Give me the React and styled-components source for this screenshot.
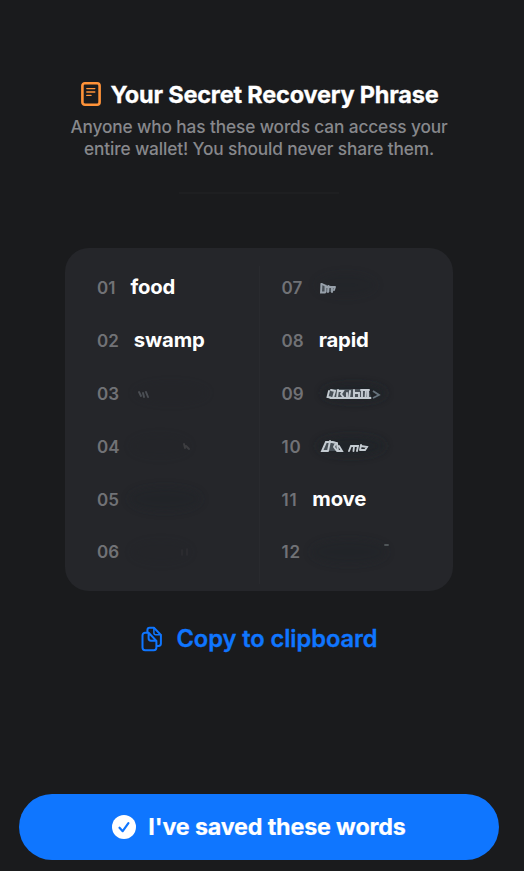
import React from "react";
import styled, { createGlobalStyle } from "styled-components";

const GlobalStyle = createGlobalStyle`
  * { box-sizing: border-box; }
  body { margin: 0; background: #1a1b1d; font-family: Inter, "Liberation Sans", sans-serif; }
`;

const Screen = styled.main`
  width: 524px;
  height: 871px;
  background: #1a1b1d;
  display: flex;
  flex-direction: column;
  align-items: center;
  padding: 81px 25px 11px 19px;
`;

const Title = styled.h1`
  margin: 0;
  height: 28px;
  padding-left: 2px;
  display: flex;
  align-items: center;
  gap: 9px;
  font-size: 23.5px;
  line-height: 28px;
  font-weight: 700;
  letter-spacing: -0.19px;
  color: #fff;
  -webkit-text-stroke: 0.3px #fff;
  white-space: nowrap;
  svg { flex: none; margin-bottom: 2px; }
`;

const Hint = styled.p`
  margin: 7px 0 0;
  font-size: 17.3px;
  line-height: 22px;
  font-weight: 500;
  letter-spacing: -0.13px;
  color: #87888c;
  text-align: center;
  white-space: nowrap;
`;

const Divider = styled.hr`
  width: 160px;
  height: 2px;
  border: 0;
  margin: 32px 0 0;
  background: #1e1f21;
`;

const Card = styled.section`
  margin-top: 54px;
  width: 388px;
  height: 343px;
  flex: none;
  border-radius: 24px;
  background: #25262a;
  display: flex;
  align-items: flex-start;
  padding-top: 13px;
`;

const Column = styled.ol`
  list-style: none;
  margin: 0;
  width: 194px;
  padding: 0 0 0 ${(p) => p.$inset}px;
`;

const Separator = styled.div`
  width: 1px;
  height: 318px;
  margin: 5px 0 0;
  background: #292a2e;
`;

const Row = styled.li`
  height: 52.9px;
  display: flex;
  align-items: center;
  gap: 15px;
`;

const Index = styled.span`
  font-size: 17px;
  font-weight: 600;
  line-height: 22px;
  margin-top: 1px;
  letter-spacing: ${(p) => (p.$wide ? "0.7px" : "0")};
  color: #717276;
`;

const Word = styled.span`
  font-size: 20.3px;
  font-weight: 700;
  line-height: 26px;
  letter-spacing: -0.15px;
  color: #fff;
`;

const Smudge = styled.svg`
  width: 90px;
  height: 40px;
  margin-left: -15px;
  flex: none;
  overflow: visible;
`;

const CopyButton = styled.button`
  margin: 34px 0 0;
  padding: 0 0 0 1px;
  border: 0;
  background: none;
  height: 28px;
  display: flex;
  align-items: center;
  gap: 13px;
  font: 600 23.7px/28px Inter, sans-serif;
  letter-spacing: -0.07px;
  color: #0f76ff;
  -webkit-text-stroke: 0.3px #0f76ff;
  white-space: nowrap;
`;

const SaveButton = styled.button`
  margin-top: auto;
  width: 480px;
  height: 66px;
  flex: none;
  border: 0;
  border-radius: 33px;
  background: #0f76ff;
  color: #fff;
  display: flex;
  align-items: center;
  justify-content: center;
  gap: 12px;
  font: 700 23.3px/28px Inter, sans-serif;
  letter-spacing: -0.17px;
  -webkit-text-stroke: 0.2px #fff;
  white-space: nowrap;
`;

const NoteIcon = () => (
  <svg width="20" height="24" viewBox="0 0 20 24" fill="none" stroke="#ff9339" strokeLinecap="round">
    <rect x="1.4" y="1.3" width="17.2" height="21.4" rx="2.5" strokeWidth="2.6" />
    <path d="M5.8 6.6h8M5.8 10h8M5.8 13.4h4.2" strokeWidth="1.4" />
  </svg>
);

const CopyIcon = () => (
  <svg width="22" height="26" viewBox="0 0 22 26" fill="none" stroke="#0f76ff" strokeWidth="2" strokeLinejoin="round" strokeLinecap="round">
    <path d="M6.4 6V4.2a2.4 2.4 0 0 1 2.4-2.4h4.1l7 7.1v8.7a2.4 2.4 0 0 1-2.4 2.4H16" />
    <path d="M12.9 2v4.8a2 2 0 0 0 2 2h4.8" strokeWidth="1.5" />
    <path d="M7.2 6.8H4.1A2.6 2.6 0 0 0 1.5 9.4v12.2a2.6 2.6 0 0 0 2.6 2.6h8.7a2.6 2.6 0 0 0 2.6-2.6V14.9L7.6 6.8v5.5a2.4 2.4 0 0 0 2.4 2.4h5.2" />
  </svg>
);

const CheckIcon = () => (
  <svg width="24" height="24" viewBox="0 0 24 24" fill="none">
    <circle cx="12" cy="12" r="12" fill="#fff" />
    <path d="M7.5 12.7l3.2 3.5 5.7-8.1" stroke="#0f76ff" strokeWidth="2.2" strokeLinecap="round" strokeLinejoin="round" />
  </svg>
);

const smudges = {
  "03": { halo: [52, 20, 38, 11], dark: 0.08, tone: "#4c4f54", marks: "M20 19l2 4M24 20l1 4M27 19l2 5" },
  "04": { halo: [40, 20, 30, 11], dark: 0.12, tone: "#3c3d41", marks: "M64 18l1 4M66 20l3 3" },
  "05": { halo: [46, 20, 36, 12], dark: 0.35, tone: "none", marks: "" },
  "06": { halo: [42, 20, 30, 11], dark: 0.12, tone: "#2b2c30", marks: "M63 18v5M68 17v6" },
  "07": { halo: [44, 18, 30, 11], dark: 0.25, tone: "#98a1ab", marks: "M19.5 17l-.5 8.5h4M20 17l4 2M23.5 19v6M26.5 19l-.5 6M30 20v5M33 20l-1 3M24 20h9", body: "M18 16l15 4-2 5H19z" },
  "09": { halo: [50, 20, 32, 9], dark: 0.7, tone: "#c4cbd1", marks: "M25 18l-1.5 6 3 .5M27 17l4 1-2 7M34 17l-1 8M35 18l4 0-2 3 3 4M43 20v5M46 18l-1 7h3M50 17v8M51 20l4 0v5M58 17v8M62 17l-.5 8h5M64 17v8M57 17h8M26 25h38", body: "M26 16h39l2 9H24z", tail: "M69 18l6 4-6 3" },
  "10": { halo: [50, 20, 34, 10], dark: 0.65, tone: "#c4cbd1", marks: "M25 16l-4 9h5M29 15l-2 10M31 16l4 1-2 4 3 4M36 17l1 8h4l-3-5M25 16h7M48 25l2-5 3 0-.5 5M53 20h4l-1 5M60 19l-1 5M60 20l6 1-2 3-4 0", body: "M25 15h9l5 10H21z" },
  "12": { halo: [48, 20, 38, 12], dark: 0.35, tone: "#505459", marks: "M84 13h3" },
};

const HiddenWord = ({ id }) => {
  const { halo, dark, tone, marks, body, tail } = smudges[id];
  const [cx, cy, rx, ry] = halo;
  return (
    <Smudge viewBox="0 0 90 40" aria-hidden="true">
      <defs>
        <filter id={`halo-${id}`} x="-30%" y="-60%" width="160%" height="220%">
          <feGaussianBlur stdDeviation="4" />
        </filter>
        <filter id={`mark-${id}`} filterUnits="userSpaceOnUse" x="0" y="0" width="100" height="40">
          <feGaussianBlur stdDeviation="0.55" />
        </filter>
      </defs>
      <ellipse cx={cx} cy={cy} rx={rx} ry={ry} fill="#1f2428" opacity={dark} filter={`url(#halo-${id})`} />
      {body && <path d={body} fill="#59626b" opacity="0.7" filter={`url(#mark-${id})`} />}
      {marks && (
        <path d={marks} fill="none" stroke={tone} strokeWidth="1.9" strokeLinecap="round" filter={`url(#mark-${id})`} />
      )}
      {tail && (
        <path d={tail} fill="none" stroke="#66727c" strokeWidth="1.8" filter={`url(#mark-${id})`} />
      )}
    </Smudge>
  );
};

const leftWords = [["01", "food"], ["02", "swamp"], ["03"], ["04"], ["05"], ["06"]];
const rightWords = [["07"], ["08", "rapid"], ["09"], ["10"], ["11", "move"], ["12"]];

const WordColumn = ({ words, inset }) => (
  <Column $inset={inset}>
    {words.map(([id, word]) => (
      <Row key={id}>
        <Index $wide={id.startsWith("1")}>{id}</Index>
        {word ? <Word>{word}</Word> : <HiddenWord id={id} />}
      </Row>
    ))}
  </Column>
);

export default function App() {
  return (
    <>
      <GlobalStyle />
      <Screen>
        <Title>
          <NoteIcon />
          <span>Your Secret Recovery Phrase</span>
        </Title>
        <Hint>
          Anyone who has these words can access your
          <br />
          entire wallet! You should never share them.
        </Hint>
        <Divider />
        <Card>
          <WordColumn words={leftWords} inset={32} />
          <Separator />
          <WordColumn words={rightWords} inset={22} />
        </Card>
        <CopyButton>
          <CopyIcon />
          <span>Copy to clipboard</span>
        </CopyButton>
        <SaveButton>
          <CheckIcon />
          <span>I've saved these words</span>
        </SaveButton>
      </Screen>
    </>
  );
}
